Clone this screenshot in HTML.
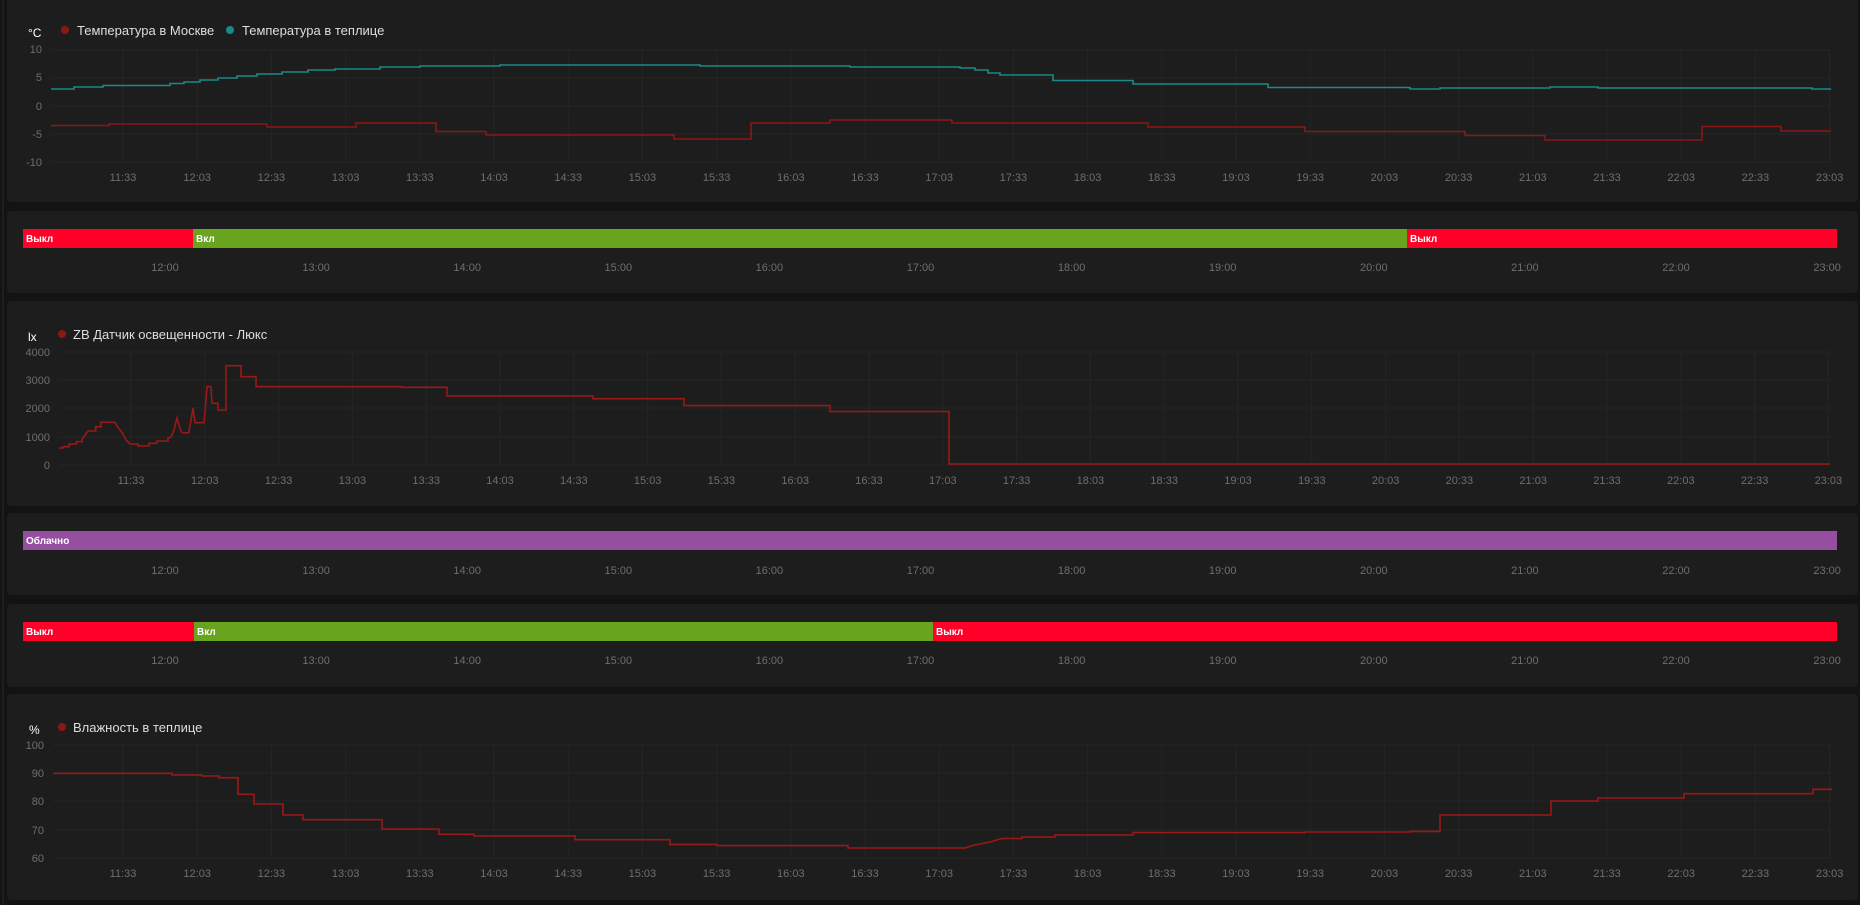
<!DOCTYPE html>
<html><head><meta charset="utf-8"><style>
html,body{margin:0;padding:0;background:#131313;width:1860px;height:905px;overflow:hidden}
svg{display:block}
text{font-family:"Liberation Sans","DejaVu Sans",sans-serif}
.ax{fill:#6e6e6e;font-size:11px}
.lg{fill:#dedede;font-size:13px}
.bl{fill:#fff;font-size:10px;font-weight:bold}
.g{stroke:#252525;stroke-width:1}
</style></head><body>
<svg width="1860" height="905" viewBox="0 0 1860 905">
<line x1="3" y1="0" x2="3" y2="905" stroke="#2a2a2a"/>
<!-- panels -->
<rect x="7" y="-4" width="1851" height="206" rx="4" fill="#1d1d1d"/>
<rect x="7" y="211" width="1851" height="82" rx="4" fill="#1d1d1d"/>
<rect x="7" y="301" width="1851" height="205" rx="4" fill="#1d1d1d"/>
<rect x="7" y="513" width="1851" height="82" rx="4" fill="#1d1d1d"/>
<rect x="7" y="604" width="1851" height="83" rx="4" fill="#1d1d1d"/>
<rect x="7" y="694" width="1851" height="206" rx="4" fill="#1d1d1d"/>

<!-- ===== Panel 1 temperature ===== -->
<g class="g">
<line x1="51" y1="50" x2="1831" y2="50"/><line x1="51" y1="78" x2="1831" y2="78"/><line x1="51" y1="106" x2="1831" y2="106"/><line x1="51" y1="134" x2="1831" y2="134"/><line x1="51" y1="162" x2="1831" y2="162"/>
</g>
<g id="vg1" class="g"></g>
<text x="28" y="37" fill="#fff" font-size="12">°C</text>
<circle cx="65" cy="30" r="4" fill="#8b1717"/><text class="lg" x="77" y="35">Температура в Москве</text>
<circle cx="230" cy="30" r="4" fill="#1a8a8a"/><text class="lg" x="242" y="35">Температура в теплице</text>
<g class="ax" text-anchor="end"><text x="42" y="53">10</text><text x="42" y="81">5</text><text x="42" y="110">0</text><text x="42" y="138">-5</text><text x="42" y="166">-10</text></g>
<g class="ax" text-anchor="middle" id="xl1"></g>
<path fill="none" stroke="#1a8a8a" stroke-width="1.6" d="M51 89 H74 V87 H103 V85.5 H170 V83.5 H184 V82 H200 V80 H218 V78 H237 V76 H257 V74 H282 V72 H308 V70 H335 V69 H380 V67 H420 V66 H500 V65 H700 V66 H850 V67 H960 V68 H975 V70 H988 V73 H1000 V75 H1053 V80.5 H1133 V84 H1268 V87.5 H1410 V89 H1440 V88 H1550 V87 H1598 V88 H1812 V89 H1831"/>
<path fill="none" stroke="#8b1717" stroke-width="1.6" d="M51 125.5 H109 V124 H267 V127 H356 V123 H436 V131.5 H486 V135 H674 V139 H751 V123 H830 V120 H952 V123 H1148 V127 H1305 V131.5 H1465 V135.5 H1545 V140 H1702 V126.5 H1781 V131 H1831"/>

<!-- ===== Panel 2 bar ===== -->
<rect x="23" y="229" width="170" height="19" fill="#ff0029"/>
<rect x="193" y="229" width="1214" height="19" fill="#68a41e"/>
<rect x="1407" y="229" width="430" height="19" fill="#ff0029"/>
<g class="bl"><text x="26" y="242">Выкл</text><text x="196" y="242">Вкл</text><text x="1410" y="242">Выкл</text></g>
<g class="ax" text-anchor="middle" id="bl2"></g>

<!-- ===== Panel 3 lux ===== -->
<g class="g">
<line x1="59" y1="352" x2="1831" y2="352"/><line x1="59" y1="380" x2="1831" y2="380"/><line x1="59" y1="408" x2="1831" y2="408"/><line x1="59" y1="437" x2="1831" y2="437"/><line x1="59" y1="465" x2="1831" y2="465"/>
</g>
<g id="vg3" class="g"></g>
<text x="28" y="341" fill="#fff" font-size="12">lx</text>
<circle cx="62" cy="334" r="4" fill="#8b1717"/><text class="lg" x="73" y="339">ZB Датчик освещенности - Люкс</text>
<g class="ax" text-anchor="end"><text x="50" y="356">4000</text><text x="50" y="384">3000</text><text x="50" y="412">2000</text><text x="50" y="441">1000</text><text x="50" y="469">0</text></g>
<g class="ax" text-anchor="middle" id="xl3"></g>
<path fill="none" stroke="#9b1818" stroke-width="1.6" d="M59 448 H63 V446.7 H69 V444 H76.5 V441.7 H82 V439.3 L88 431 H95.7 V426.7 H101 V422.3 H115 L117 426 L122.5 433.3 L126 440 L130 444 H138 V446 H149 V443.3 H157 V441 H168 V438.3 L171 437 L174 430 L177 418 L180 428.3 L182 432.7 H189 V432 L193 407.7 L195 422.7 H204 L206 400 L207 386.7 H211 L212 403.3 H218 V410 H226 V365.7 H241 V376.7 H256 V386.7 H402 V387.3 H447 V396 H593 V398.7 H684 V405.6 H830 V411.5 H949 V464 H1830"/>

<!-- ===== Panel 4 bar ===== -->
<rect x="23" y="531" width="1814" height="19" fill="#964fa0"/>
<text class="bl" x="26" y="544">Облачно</text>
<g class="ax" text-anchor="middle" id="bl4"></g>

<!-- ===== Panel 5 bar ===== -->
<rect x="23" y="622" width="171" height="19" fill="#ff0029"/>
<rect x="194" y="622" width="739" height="19" fill="#68a41e"/>
<rect x="933" y="622" width="904" height="19" fill="#ff0029"/>
<g class="bl"><text x="26" y="635">Выкл</text><text x="197" y="635">Вкл</text><text x="936" y="635">Выкл</text></g>
<g class="ax" text-anchor="middle" id="bl5"></g>

<!-- ===== Panel 6 humidity ===== -->
<g class="g">
<line x1="53" y1="745" x2="1831" y2="745"/><line x1="53" y1="773" x2="1831" y2="773"/><line x1="53" y1="801" x2="1831" y2="801"/><line x1="53" y1="830" x2="1831" y2="830"/><line x1="53" y1="858" x2="1831" y2="858"/>
</g>
<g id="vg6" class="g"></g>
<text x="29" y="734" fill="#fff" font-size="12">%</text>
<circle cx="62" cy="727" r="4" fill="#8b1717"/><text class="lg" x="73" y="732">Влажность в теплице</text>
<g class="ax" text-anchor="end"><text x="44" y="749">100</text><text x="44" y="777">90</text><text x="44" y="805">80</text><text x="44" y="834">70</text><text x="44" y="862">60</text></g>
<g class="ax" text-anchor="middle" id="xl6"></g>
<path fill="none" stroke="#9b1818" stroke-width="1.6" d="M53 773.3 H172 V775 H202 V776 H219 V777.7 H238 V794.3 H254 V804 H283 V815 H303 V819.7 H382 V829 H439 V834.3 H474 V836 H575 V839.7 H670 V844.4 H717 V845.6 H848 V848 H965 L972 845.6 L990 842 L1002 838.5 H1022 V837 H1055 V835 H1133 V832.6 H1305 V832 H1410 V831.4 H1440 V815 H1551 V801 H1598 V798 H1684 V793.7 H1813 V789.3 H1832"/>
</svg>
<script>
var NS="http://www.w3.org/2000/svg";
function el(p,tag,attrs,txt){var e=document.createElementNS(NS,tag);for(var k in attrs)e.setAttribute(k,attrs[k]);if(txt)e.textContent=txt;p.appendChild(e);}
var t=["11:33","12:03","12:33","13:03","13:33","14:03","14:33","15:03","15:33","16:03","16:33","17:03","17:33","18:03","18:33","19:03","19:33","20:03","20:33","21:03","21:33","22:03","22:33","23:03"];
function xl(id,vg,y,x0,dx,top,bot){var g=document.getElementById(id),v=document.getElementById(vg);for(var i=0;i<t.length;i++){var x=x0+i*dx;el(g,"text",{x:x.toFixed(1),y:y},t[i]);el(v,"line",{x1:x,y1:top,x2:x,y2:bot});}}
xl("xl1","vg1",181,123,74.2,50,162);
xl("xl3","vg3",484,131,73.8,352,465);
xl("xl6","vg6",877,123,74.2,745,858);
var h=["12:00","13:00","14:00","15:00","16:00","17:00","18:00","19:00","20:00","21:00","22:00","23:00"];
function bl(id,y){var g=document.getElementById(id);for(var i=0;i<h.length;i++)el(g,"text",{x:(165+i*151.1).toFixed(1),y:y},h[i]);}
bl("bl2",271);bl("bl4",574);bl("bl5",664);
</script>
</body></html>
